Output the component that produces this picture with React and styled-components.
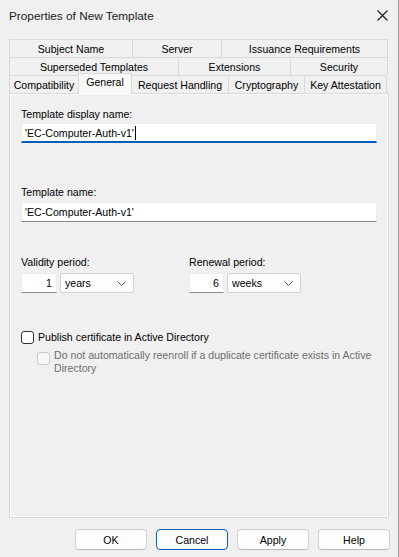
import React from 'react';
import styled, { createGlobalStyle } from 'styled-components';

const GlobalStyle = createGlobalStyle`
  html, body {
    margin: 0;
    padding: 0;
    background: #f0f0f0;
  }
  body {
    font-family: "Liberation Sans", Arial, sans-serif;
    font-size: 10.6px;
    color: #000;
  }
  * {
    box-sizing: border-box;
  }
`;

const tabRows = [
  [
    { label: 'Subject Name', width: 123 },
    { label: 'Server', width: 89 },
    { label: 'Issuance Requirements', width: 167 },
  ],
  [
    { label: 'Superseded Templates', width: 169 },
    { label: 'Extensions', width: 112 },
    { label: 'Security', width: 98 },
  ],
  [
    { label: 'Compatibility', width: 69 },
    { label: 'General', width: 54, active: true },
    { label: 'Request Handling', width: 97 },
    { label: 'Cryptography', width: 76 },
    { label: 'Key Attestation', width: 83 },
  ],
];

const Chevron = () => (
  <svg width="9" height="5" viewBox="0 0 9 5">
    <path d="M0.5 0.5 L4.5 4.5 L8.5 0.5" fill="none" stroke="#5c5c5c" strokeWidth="1" />
  </svg>
);

const CloseIcon = () => (
  <svg width="11" height="11" viewBox="0 0 11 11">
    <path d="M0.5 0.5 L10.5 10.5 M10.5 0.5 L0.5 10.5" stroke="#1a1a1a" strokeWidth="1.1" />
  </svg>
);

export default function App() {
  return (
    <>
      <GlobalStyle />
      <Window>
        <TitleBar>
          <Title>Properties of New Template</Title>
          <CloseButton>
            <CloseIcon />
          </CloseButton>
        </TitleBar>

        <TabStrip>
          {tabRows.map((row, i) => (
            <TabRow key={i}>
              {row.map((tab) => (
                <Tab key={tab.label} $width={tab.width} $active={tab.active}>
                  {tab.label}
                </Tab>
              ))}
            </TabRow>
          ))}
        </TabStrip>

        <Panel>
          <Label>Template display name:</Label>
          <TextBox $focused $mt={1}>
            'EC-Computer-Auth-v1'
            <Caret />
          </TextBox>

          <Label $mt={42}>Template name:</Label>
          <TextBox $mt={2}>'EC-Computer-Auth-v1'</TextBox>

          <PeriodRow>
            <PeriodGroup>
              <Label>Validity period:</Label>
              <PeriodControls>
                <NumberBox $width={36}>1</NumberBox>
                <Select>
                  years
                  <Chevron />
                </Select>
              </PeriodControls>
            </PeriodGroup>
            <PeriodGroup>
              <Label>Renewal period:</Label>
              <PeriodControls>
                <NumberBox $width={35}>6</NumberBox>
                <Select>
                  weeks
                  <Chevron />
                </Select>
              </PeriodControls>
            </PeriodGroup>
          </PeriodRow>

          <CheckRow $mt={38}>
            <CheckBox />
            <CheckText>Publish certificate in Active Directory</CheckText>
          </CheckRow>
          <CheckRow $mt={5} $indent={16} $disabled>
            <CheckBox $disabled />
            <CheckText>
              Do not automatically reenroll if a duplicate certificate exists in Active
              Directory
            </CheckText>
          </CheckRow>
        </Panel>

        <ButtonBar>
          <Button>OK</Button>
          <Button $default>Cancel</Button>
          <Button>Apply</Button>
          <Button>Help</Button>
        </ButtonBar>
      </Window>
    </>
  );
}

const Window = styled.div`
  width: 399px;
  height: 557px;
  border-right: 1px solid #a3a3a3;
  background: #f0f0f0;
  display: flex;
  flex-direction: column;
`;

const TitleBar = styled.div`
  height: 31px;
  display: flex;
  align-items: center;
  justify-content: space-between;
  padding: 0 10px 0 9px;
`;

const Title = styled.div`
  font-size: 11.8px;
  color: #1a1a1a;
`;

const CloseButton = styled.div`
  display: flex;
  align-items: center;
  padding-bottom: 1px;
`;

const TabStrip = styled.div`
  margin: 8px 0 0 9px;
  width: 379px;
  display: flex;
  flex-direction: column;
  position: relative;
  z-index: 1;
`;

const TabRow = styled.div`
  display: flex;
  height: 18px;
`;

const Tab = styled.div`
  width: ${(p) => p.$width}px;
  height: ${(p) => (p.$active ? 21 : 18)}px;
  margin-top: ${(p) => (p.$active ? -2 : 0)}px;
  display: flex;
  align-items: center;
  justify-content: center;
  padding-top: ${(p) => (p.$active ? 0 : 1)}px;
  padding-bottom: ${(p) => (p.$active ? 5 : 0)}px;
  border: 1px solid #d9d9d9;
  border-right: none;
  border-bottom: none;
  background: ${(p) => (p.$active ? '#f9f9f9' : '#f0f0f0')};
  white-space: nowrap;
  color: #000;

  &:last-child {
    border-right: 1px solid #d9d9d9;
  }
  ${(p) => p.$active && 'border-right: 1px solid #d9d9d9; margin-right: -1px;'}
`;

const Panel = styled.div`
  margin-left: 9px;
  width: 380px;
  height: 425px;
  border: 1px solid #d9d9d9;
  box-shadow: inset 1px 1px 0 #fbfbfb, inset -1px -1px 0 #fbfbfb;
  background: #f0f0f0;
  padding: 13px 11px 0 11px;
  display: flex;
  flex-direction: column;
  align-items: flex-start;
`;

const Label = styled.div`
  line-height: 15px;
  margin-top: ${(p) => p.$mt || 0}px;
  color: #000;
`;

const TextBox = styled.div`
  width: 356px;
  height: 20px;
  margin-top: ${(p) => p.$mt || 0}px;
  background: #fff;
  border: 1px solid #ececec;
  border-bottom: ${(p) => (p.$focused ? '2px solid #005fb8' : '1px solid #8a8a8a')};
  padding: 0 3px;
  display: flex;
  align-items: center;
  white-space: pre;
`;

const Caret = styled.span`
  display: inline-block;
  width: 1px;
  height: 14px;
  background: #000;
  margin-left: 1px;
`;

const PeriodRow = styled.div`
  display: flex;
  margin-top: 33px;
`;

const PeriodGroup = styled.div`
  width: 168px;
  display: flex;
  flex-direction: column;
`;

const PeriodControls = styled.div`
  display: flex;
  gap: 3px;
  margin-top: 3px;
`;

const NumberBox = styled.div`
  width: ${(p) => p.$width}px;
  height: 20px;
  background: #fff;
  border: 1px solid #ececec;
  border-bottom: 1px solid #8a8a8a;
  display: flex;
  align-items: center;
  justify-content: flex-end;
  padding-right: 4px;
`;

const Select = styled.div`
  width: 74px;
  height: 20px;
  background: #fdfdfd;
  border: 1px solid #d3d3d3;
  border-radius: 2px;
  display: flex;
  align-items: center;
  justify-content: space-between;
  padding: 0 7px 0 4px;
`;

const CheckRow = styled.div`
  display: flex;
  align-items: flex-start;
  gap: 4px;
  margin-top: ${(p) => p.$mt || 0}px;
  margin-left: ${(p) => p.$indent || 0}px;
  color: ${(p) => (p.$disabled ? '#6d6d6d' : '#000')};
  width: ${(p) => 356 - (p.$indent || 0)}px;
`;

const CheckBox = styled.div`
  flex: none;
  width: 13px;
  height: 13px;
  margin-top: ${(p) => (p.$disabled ? 3 : 0)}px;
  border-radius: 3px;
  border: 1px solid ${(p) => (p.$disabled ? '#c9c9c9' : '#333')};
  background: ${(p) => (p.$disabled ? '#f7f7f7' : '#fff')};
`;

const CheckText = styled.div`
  line-height: 13px;
`;

const ButtonBar = styled.div`
  display: flex;
  justify-content: flex-end;
  gap: 9px;
  margin-top: 11px;
  padding-right: 8px;
`;

const Button = styled.div`
  width: 72px;
  height: 21px;
  border-radius: 4px;
  background: #fdfdfd;
  border: 1px solid ${(p) => (p.$default ? '#005fb8' : '#d0d0d0')};
  border-bottom-color: ${(p) => (p.$default ? '#005fb8' : '#b8b8b8')};
  display: flex;
  align-items: center;
  justify-content: center;
  color: #000;
`;
